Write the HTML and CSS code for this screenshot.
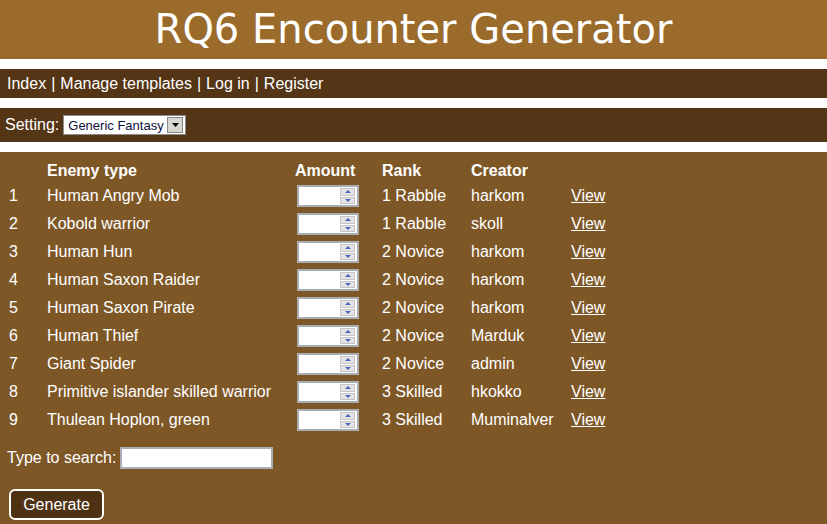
FILE: index.html
```html
<!DOCTYPE html>
<html>
<head>
<meta charset="utf-8">
<title>RQ6 Encounter Generator</title>
<link rel="stylesheet" href="styles.css">
</head>
<body>
<header class="title-bar"><h1>RQ6 Encounter Generator</h1></header>
<nav class="bar nav-bar">
  <a href="#">Index</a><span class="sep">|</span><a href="#">Manage templates</a><span class="sep">|</span><a href="#">Log in</a><span class="sep">|</span><a href="#">Register</a>
</nav>
<div class="bar setting-bar">
  <span class="label">Setting:</span>
  <div class="select"><span class="select-text">Generic Fantasy</span><span class="select-btn"><svg width="7" height="4" viewBox="0 0 7 4"><path d="M0 0h7L3.5 4z" fill="#000"/></svg></span></div>
</div>
<main class="content">
  <table class="enemies">
    <colgroup><col class="c-num"><col class="c-name"><col class="c-amt"><col class="c-rank"><col class="c-creator"><col class="c-view"></colgroup>
    <thead>
      <tr><th></th><th>Enemy type</th><th>Amount</th><th>Rank</th><th>Creator</th><th></th></tr>
    </thead>
    <tbody>
      <tr><td>1</td><td>Human Angry Mob</td><td><div class="spin"><span class="spin-field"></span><span class="spin-btns"><span class="sb"><i class="up"></i></span><span class="sb"><i class="down"></i></span></span></div></td><td>1 Rabble</td><td>harkom</td><td><a href="#">View</a></td></tr>
      <tr><td>2</td><td>Kobold warrior</td><td><div class="spin"><span class="spin-field"></span><span class="spin-btns"><span class="sb"><i class="up"></i></span><span class="sb"><i class="down"></i></span></span></div></td><td>1 Rabble</td><td>skoll</td><td><a href="#">View</a></td></tr>
      <tr><td>3</td><td>Human Hun</td><td><div class="spin"><span class="spin-field"></span><span class="spin-btns"><span class="sb"><i class="up"></i></span><span class="sb"><i class="down"></i></span></span></div></td><td>2 Novice</td><td>harkom</td><td><a href="#">View</a></td></tr>
      <tr><td>4</td><td>Human Saxon Raider</td><td><div class="spin"><span class="spin-field"></span><span class="spin-btns"><span class="sb"><i class="up"></i></span><span class="sb"><i class="down"></i></span></span></div></td><td>2 Novice</td><td>harkom</td><td><a href="#">View</a></td></tr>
      <tr><td>5</td><td>Human Saxon Pirate</td><td><div class="spin"><span class="spin-field"></span><span class="spin-btns"><span class="sb"><i class="up"></i></span><span class="sb"><i class="down"></i></span></span></div></td><td>2 Novice</td><td>harkom</td><td><a href="#">View</a></td></tr>
      <tr><td>6</td><td>Human Thief</td><td><div class="spin"><span class="spin-field"></span><span class="spin-btns"><span class="sb"><i class="up"></i></span><span class="sb"><i class="down"></i></span></span></div></td><td>2 Novice</td><td>Marduk</td><td><a href="#">View</a></td></tr>
      <tr><td>7</td><td>Giant Spider</td><td><div class="spin"><span class="spin-field"></span><span class="spin-btns"><span class="sb"><i class="up"></i></span><span class="sb"><i class="down"></i></span></span></div></td><td>2 Novice</td><td>admin</td><td><a href="#">View</a></td></tr>
      <tr><td>8</td><td>Primitive islander skilled warrior</td><td><div class="spin"><span class="spin-field"></span><span class="spin-btns"><span class="sb"><i class="up"></i></span><span class="sb"><i class="down"></i></span></span></div></td><td>3 Skilled</td><td>hkokko</td><td><a href="#">View</a></td></tr>
      <tr><td>9</td><td>Thulean Hoplon, green</td><td><div class="spin"><span class="spin-field"></span><span class="spin-btns"><span class="sb"><i class="up"></i></span><span class="sb"><i class="down"></i></span></span></div></td><td>3 Skilled</td><td>Muminalver</td><td><a href="#">View</a></td></tr>
    </tbody>
  </table>
  <div class="search-row"><span class="label">Type to search:</span><span class="search-box"></span></div>
  <div class="gen-row"><button class="generate" type="button">Generate</button></div>
</main>
</body>
</html>
```
FILE: styles.css
```css
html, body {
  margin: 0;
  padding: 0;
  background: #fff;
  font-family: "Liberation Sans", Arial, sans-serif;
  font-size: 16px;
  color: #fff;
}
body {
  display: flex;
  flex-direction: column;
  min-height: 100vh;
}
.title-bar {
  background: #9a6b2b;
  height: 59px;
  margin-bottom: 10px;
}
.title-bar h1 {
  margin: 0;
  font-family: "DejaVu Sans", sans-serif;
  font-weight: normal;
  font-size: 40px;
  line-height: 58px;
  text-align: center;
  color: #fff;
}
.bar {
  background: #543516;
  display: flex;
  align-items: center;
}
.nav-bar {
  height: 29px;
  padding-left: 7px;
  margin-bottom: 10px;
}
.nav-bar a {
  color: #fff;
  text-decoration: none;
}
.nav-bar .sep {
  margin: 0 5px;
}
.setting-bar {
  height: 34px;
  padding-left: 5px;
  margin-bottom: 10px;
}
.setting-bar .label {
  margin-right: 4px;
}
.select {
  display: flex;
  align-items: center;
  width: 121px;
  height: 18px;
  background: #fff;
  border: 1px solid #8c8c8c;
}
.select-text {
  flex: 1;
  padding-left: 4px;
  font-size: 13px;
  color: #101040;
}
.select-btn {
  width: 14px;
  height: 14px;
  margin-right: 2px;
  background: #d8d6d0;
  border: 1px solid #8a8a8a;
  display: flex;
  align-items: center;
  justify-content: center;
}
.content {
  flex: 1;
  padding: 7px 0 4px 0;
  background: #7e5727;
}
.enemies {
  border-collapse: collapse;
  table-layout: fixed;
  margin-left: 9px;
}
.c-num { width: 38px; }
.c-name { width: 248px; }
.c-amt { width: 87px; }
.c-rank { width: 89px; }
.c-creator { width: 100px; }
.c-view { width: 60px; }
.enemies th, .enemies td {
  padding: 0;
  text-align: left;
  vertical-align: middle;
  white-space: nowrap;
}
.enemies thead tr { height: 23px; }
.enemies tbody tr { height: 28px; }
.enemies th { font-weight: bold; }
.enemies a { color: #fff; text-decoration: underline; }
.spin {
  display: flex;
  width: 58px;
  height: 18px;
  margin-left: 2px;
  background: #fff;
  border: 2px solid #a9aeb6;
}
.spin-field { flex: 1; }
.spin-btns {
  display: flex;
  flex-direction: column;
  width: 15px;
  margin: 1px 2px 1px 0;
  gap: 1px;
}
.sb {
  flex: 1;
  background: #e3e3e3;
  border: 1px solid #c4c4c4;
  display: flex;
  align-items: center;
  justify-content: center;
}
.sb i {
  width: 0;
  height: 0;
  border-left: 3px solid transparent;
  border-right: 3px solid transparent;
}
.sb .up { border-bottom: 3px solid #4d64b8; }
.sb .down { border-top: 3px solid #4d64b8; }
.search-row {
  display: flex;
  align-items: center;
  height: 22px;
  margin-top: 13px;
  padding-left: 7px;
}
.search-row .label { margin-right: 4px; }
.search-box {
  width: 149px;
  height: 18px;
  background: #fff;
  border: 2px solid #a9aeb6;
}
.gen-row {
  margin-top: 20px;
  padding-left: 9px;
}
.generate {
  width: 95px;
  height: 31px;
  background: #4f3214;
  color: #fff;
  border: 2px solid #fff;
  border-radius: 6px;
  font-family: "Liberation Sans", Arial, sans-serif;
  font-size: 16px;
  padding: 0;
}
```
